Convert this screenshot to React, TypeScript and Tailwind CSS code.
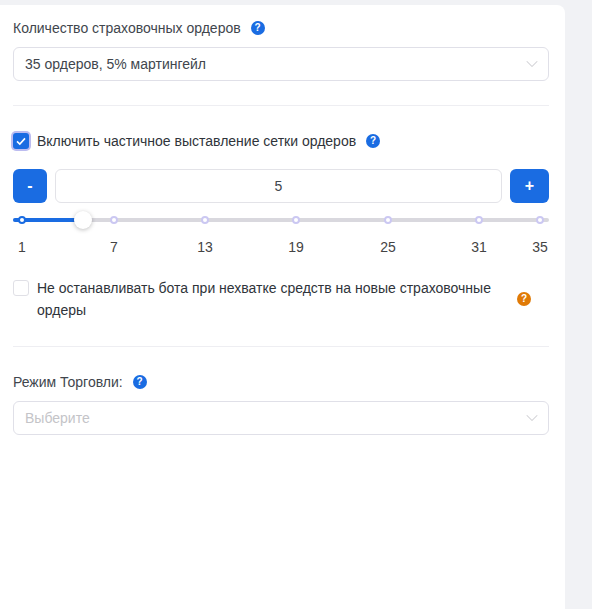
import { ChevronDown } from "lucide-react"

const marks = [
    { label: "1", left: 9 },
    { label: "7", left: 101 },
    { label: "13", left: 192 },
    { label: "19", left: 283 },
    { label: "25", left: 375 },
    { label: "31", left: 466 },
    { label: "35", left: 527 },
]

function Hint({ color = "bg-[#1a6ce2]" }: { color?: string }) {
    return (
        <span className={`flex h-[14px] w-[14px] shrink-0 items-center justify-center rounded-full text-[10px] font-bold leading-none text-white ${color}`}>
            ?
        </span>
    )
}

function Select({ value, placeholder }: { value?: string; placeholder?: string }) {
    return (
        <div className="flex h-[34px] items-center justify-between rounded-md border border-[#e0e0e8] bg-white pl-[11px] pr-[6px]">
            <span className={value ? "text-[#41464d]" : "mt-[-1px] text-[#c4c4c8]"}>{value || placeholder}</span>
            <ChevronDown className="h-5 w-5 text-[#d0d0d4]" strokeWidth={1.25} />
        </div>
    )
}

function Slider() {
    return (
        <div className="relative">
            <div className="relative mt-[15px] h-1 rounded-full bg-[#d9d8de]">
                <div className="absolute left-0 top-0 h-1 w-[65px] rounded-full bg-[#1a6ce2]" />
                {marks.map((m, i) => (
                    <span
                        key={m.label}
                        className={`absolute top-[-2px] h-2 w-2 -translate-x-1/2 rounded-full border-2 bg-white ${i === 0 ? "border-[#1a6ce2]" : "border-[#cbc8f2]"}`}
                        style={{ left: m.left }}
                    />
                ))}
                <span className="absolute left-[61px] top-[-7px] h-[18px] w-[18px] rounded-full bg-white shadow-[0_1px_4px_rgba(0,0,0,0.25)]" />
            </div>
            <div className="relative mt-4 mb-[21px] h-[18px] text-[#444]">
                {marks.map((m) => (
                    <span key={m.label} className="absolute top-0 -translate-x-1/2 leading-[18px]" style={{ left: m.left }}>
                        {m.label}
                    </span>
                ))}
            </div>
        </div>
    )
}

export default function App() {
    return (
        <div className="min-h-[609px] bg-[#f1f2f5] pt-[5px] font-['Liberation_Sans',sans-serif] text-sm">
            <div className="h-[604px] w-[565px] rounded-tr-lg bg-white pl-[13px] pr-4 pt-3">
                <div className="flex h-[22px] items-center gap-[10px] text-[#41464d]">
                    <span>Количество страховочных ордеров</span>
                    <Hint />
                </div>
                <div className="mt-2">
                    <Select value="35 ордеров, 5% мартингейл" />
                </div>

                <div className="mt-6 h-px bg-[#eeeef2]" />

                <div className="mt-6 flex h-[22px] items-center text-[#2f343a]">
                    <span className="flex h-4 w-4 items-center justify-center rounded-[3px] bg-[#1a6ce2] shadow-[0_0_0_2px_#bcbcf0]">
                        <svg viewBox="0 0 12 12" className="h-3 w-3" fill="none" stroke="white" strokeWidth="1.6">
                            <path d="M2 6.4 4.8 9 10 3.4" />
                        </svg>
                    </span>
                    <span className="ml-2">Включить частичное выставление сетки ордеров</span>
                    <span className="ml-[10px]"><Hint /></span>
                </div>

                <div className="mt-[17px] flex h-[34px] gap-2">
                    <button className="w-[34px] rounded-md bg-[#1a6ce2] text-base font-bold text-white">-</button>
                    <div className="flex flex-1 items-center justify-center rounded-md border border-[#e3e3e8] text-[#41464d]">5</div>
                    <button className="w-[39px] rounded-md bg-[#1a6ce2] text-base font-bold text-white">+</button>
                </div>

                <Slider />

                <div className="flex items-center">
                    <span className="mb-[22px] h-4 w-4 shrink-0 rounded-[3px] border border-[#e0e0e6] bg-white" />
                    <span className="ml-2 w-[470px] leading-[22px] text-[#2f343a]">
                        Не останавливать бота при нехватке средств на новые страховочные ордеры
                    </span>
                    <span className="ml-[10px]"><Hint color="bg-[#e07a06]" /></span>
                </div>

                <div className="mt-[25px] h-px bg-[#eeeef2]" />

                <div className="mt-6 flex h-[22px] items-center gap-[10px] text-[#41464d]">
                    <span>Режим Торговли:</span>
                    <Hint />
                </div>
                <div className="mt-2">
                    <Select placeholder="Выберите" />
                </div>
            </div>
        </div>
    )
}
